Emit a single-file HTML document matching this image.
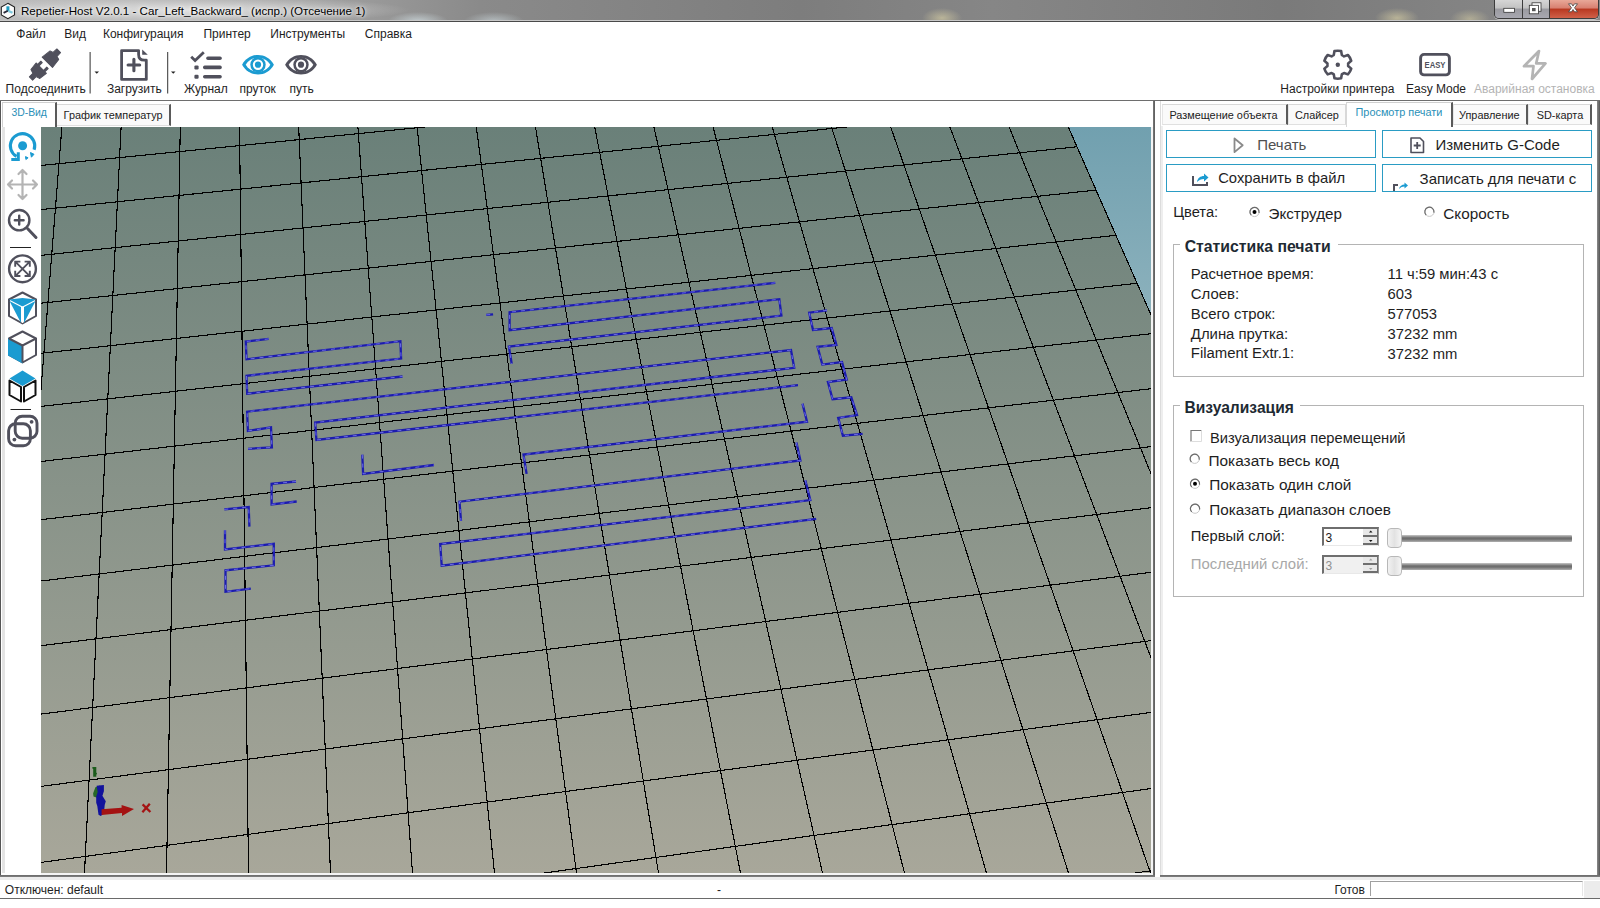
<!DOCTYPE html><html><head><meta charset="utf-8"><style>html,body{margin:0;padding:0;width:1600px;height:908px;overflow:hidden;background:#fff;position:relative;}.t{position:absolute;white-space:pre;font-family:"Liberation Sans", sans-serif;}</style></head><body><div style="position:absolute;left:0;top:0;width:1600px;height:21px;background:radial-gradient(ellipse 220px 14px at 190px 10px, rgba(235,235,235,0.85), rgba(235,235,235,0) 100%),radial-gradient(ellipse 30px 9px at 418px 21px, rgba(220,235,240,0.6), rgba(220,235,240,0)),radial-gradient(ellipse 30px 9px at 494px 21px, rgba(220,235,240,0.5), rgba(220,235,240,0)),radial-gradient(ellipse 20px 10px at 942px 18px, rgba(230,220,170,0.55), rgba(230,220,170,0)),radial-gradient(ellipse 22px 10px at 1397px 18px, rgba(230,220,170,0.55), rgba(230,220,170,0)),radial-gradient(ellipse 20px 10px at 1470px 19px, rgba(230,220,170,0.45), rgba(230,220,170,0)),linear-gradient(90deg,#bdbdbd 0%,#a0a0a0 20%,#8a8a8a 30%,#7d7d7d 50%,#868686 62%,#7a7a7a 80%,#8a8a8a 100%)"></div><div style="position:absolute;left:0px;top:20px;width:1600px;height:1px;background:#c8c8c8"></div><div style="position:absolute;left:0px;top:21px;width:1600px;height:1px;background:#4a4a4a"></div><div class="t" style="left:21.00px;top:5.18px;font-size:11.6px;line-height:11.6px;color:#000;font-weight:normal;text-shadow:0 0 6px #fff,0 0 3px #fff;">Repetier-Host V2.0.1 - Car_Left_Backward_ (испр.) (Отсечение 1)</div><div style="position:absolute;left:1494px;top:0;width:103px;height:18px;border:1px solid #3c3c3c;border-top:none;border-radius:0 0 5px 5px;overflow:hidden;box-shadow:0 1px 0 rgba(255,255,255,0.5);"><div style="position:absolute;left:0;top:0;width:27px;height:18px;background:linear-gradient(#d6d6d6,#c2c2c2 45%,#9a9aa0 50%,#a8a8b0)"></div><div style="position:absolute;left:27px;top:0;width:1px;height:18px;background:#3c3c3c"></div><div style="position:absolute;left:28px;top:0;width:26px;height:18px;background:linear-gradient(#d6d6d6,#c2c2c2 45%,#9a9aa0 50%,#a8a8b0)"></div><div style="position:absolute;left:54px;top:0;width:1px;height:18px;background:#3c3c3c"></div><div style="position:absolute;left:55px;top:0;width:48px;height:18px;background:linear-gradient(#e8a898,#d88070 45%,#b83820 50%,#d06048)"></div></div><svg width="1600" height="22" style="position:absolute;left:0;top:0"><rect x="1503.8" y="8.3" width="10.6" height="4" fill="#fff" stroke="#333" stroke-width="0.8"/><rect x="1532" y="2.8" width="9" height="8.5" fill="#fff" stroke="#333" stroke-width="0.8"/><rect x="1529.3" y="5.3" width="9.2" height="8.5" fill="#fff" stroke="#333" stroke-width="0.8"/><rect x="1532" y="8" width="3.6" height="3.2" fill="#555"/><path d="M1568.5 3.8l3 0 1.5 2.3 1.5-2.3h3l-3 4 3 4h-3l-1.5-2.3-1.5 2.3h-3l3-4z" fill="#fff" stroke="#444" stroke-width="0.8"/></svg><div class="t" style="left:16.30px;top:28.14px;font-size:12px;line-height:12px;color:#1e1e1e;font-weight:normal;">Файл</div><div class="t" style="left:64.30px;top:28.14px;font-size:12px;line-height:12px;color:#1e1e1e;font-weight:normal;">Вид</div><div class="t" style="left:102.90px;top:28.14px;font-size:12px;line-height:12px;color:#1e1e1e;font-weight:normal;">Конфигурация</div><div class="t" style="left:203.40px;top:28.14px;font-size:12px;line-height:12px;color:#1e1e1e;font-weight:normal;">Принтер</div><div class="t" style="left:270.30px;top:28.14px;font-size:12px;line-height:12px;color:#1e1e1e;font-weight:normal;">Инструменты</div><div class="t" style="left:364.80px;top:28.14px;font-size:12px;line-height:12px;color:#1e1e1e;font-weight:normal;">Справка</div><div class="t" style="left:5.60px;top:83.14px;font-size:12px;line-height:12px;color:#1e1e1e;font-weight:normal;">Подсоединить</div><div class="t" style="left:106.90px;top:83.14px;font-size:12px;line-height:12px;color:#1e1e1e;font-weight:normal;">Загрузить</div><div class="t" style="left:184.00px;top:83.14px;font-size:12px;line-height:12px;color:#1e1e1e;font-weight:normal;">Журнал</div><div class="t" style="left:239.50px;top:83.14px;font-size:12px;line-height:12px;color:#1e1e1e;font-weight:normal;">пруток</div><div class="t" style="left:289.50px;top:83.14px;font-size:12px;line-height:12px;color:#1e1e1e;font-weight:normal;">путь</div><div class="t" style="left:1280.30px;top:83.14px;font-size:12px;line-height:12px;color:#1e1e1e;font-weight:normal;">Настройки принтера</div><div class="t" style="left:1406.00px;top:83.14px;font-size:12px;line-height:12px;color:#1e1e1e;font-weight:normal;">Easy Mode </div><div class="t" style="left:1474.00px;top:83.14px;font-size:12px;line-height:12px;color:#b4b4b4;font-weight:normal;">Аварийная остановка</div><svg width="1600" height="100" style="position:absolute;left:0;top:0"><g transform="translate(45 64.5) rotate(-45)" fill="#50505c" stroke="#50505c" stroke-width="1" stroke-linejoin="round"><path d="M3.2 -7.2L13.2 -6L14.2 -2.8L19.4 -2.6L19.4 2.6L14.2 2.8L13.2 6.2L3.2 7.4z"/><path d="M-5.2 -7.4L-5.2 7.2L-13.5 6.2L-14.8 2.3L-19.8 2.3L-19.8 -2.3L-14.8 -2.3L-13.5 -6.4z"/><path d="M-5.5 -5.3L-0.6 -5.3L-0.6 -3.3L-5.5 -3.3zM-5.5 3.1L-0.6 3.1L-0.6 5.1L-5.5 5.1z"/></g><path d="M121.6 50.6H138.6V54.5Q138.6 60.2 144.3 60.2H146.3V79.4H121.6Z" fill="none" stroke="#50505c" stroke-width="2.8" stroke-linejoin="round"/><path d="M142.2 49.5L147.8 54.8L142.6 54.8Q142.2 54.8 142.2 54.4Z" fill="#50505c"/><g stroke="#50505c" stroke-width="3.1" stroke-linecap="round"><path d="M133.9 59.2v11.6M128.1 65h11.6"/></g><path d="M191.2 56.8L195.1 60.5L203.8 52.3" fill="none" stroke="#50505c" stroke-width="2.8"/><g fill="#50505c"><rect x="206.2" y="56.4" width="15.6" height="3.5" rx="1.7"/><rect x="194.4" y="65.4" width="4.2" height="4" rx="1.2"/><rect x="203" y="65.6" width="18.8" height="3.6" rx="1.7"/><rect x="194.4" y="74.7" width="4.2" height="4" rx="1.2"/><rect x="203" y="74.9" width="18.8" height="3.6" rx="1.7"/></g><path d="M242.1 64.7C249 51.7 267 51.7 273.9 64.7C267 77.7 249 77.7 242.1 64.7z" fill="#1b9bd1"/><path d="M245.7 64.7C251 55.300000000000004 265 55.300000000000004 270.3 64.7C265 74.10000000000001 251 74.10000000000001 245.7 64.7z" fill="#fff"/><circle cx="258" cy="64.7" r="7.7" fill="#1b9bd1"/><circle cx="258" cy="64.7" r="5.2" fill="#fff"/><circle cx="258" cy="64.7" r="3.1" fill="#1b9bd1"/><path d="M285.1 64.7C292 51.7 310 51.7 316.9 64.7C310 77.7 292 77.7 285.1 64.7z" fill="#50505c"/><path d="M288.7 64.7C294 55.300000000000004 308 55.300000000000004 313.3 64.7C308 74.10000000000001 294 74.10000000000001 288.7 64.7z" fill="#fff"/><circle cx="301" cy="64.7" r="7.7" fill="#50505c"/><circle cx="301" cy="64.7" r="5.2" fill="#fff"/><circle cx="301" cy="64.7" r="3.1" fill="#50505c"/><path d="M94.5 71.5h4.5l-2.25 2.3z" fill="#222"/><path d="M171 71.5h4.5l-2.25 2.3z" fill="#222"/><rect x="89.6" y="52" width="1" height="41.5" fill="#333"/><rect x="167.2" y="52" width="1" height="41.5" fill="#333"/><path d="M1333.75 55.12L1334.47 51.10A14.0 14.0 0 0 1 1341.13 51.10L1341.85 55.12A10.4 10.4 0 0 1 1344.07 56.40L1347.91 55.02A14.0 14.0 0 0 1 1351.24 60.78L1348.12 63.42A10.4 10.4 0 0 1 1348.12 65.98L1351.24 68.62A14.0 14.0 0 0 1 1347.91 74.38L1344.07 73.00A10.4 10.4 0 0 1 1341.85 74.28L1341.13 78.30A14.0 14.0 0 0 1 1334.47 78.30L1333.75 74.28A10.4 10.4 0 0 1 1331.53 73.00L1327.69 74.38A14.0 14.0 0 0 1 1324.36 68.62L1327.48 65.98A10.4 10.4 0 0 1 1327.48 63.42L1324.36 60.78A14.0 14.0 0 0 1 1327.69 55.02L1331.53 56.40A10.4 10.4 0 0 1 1333.75 55.12z" fill="none" stroke="#50505c" stroke-width="2.6" stroke-linejoin="round"/><circle cx="1337.8" cy="64.7" r="2.2" fill="#50505c"/><rect x="1420.6" y="54.4" width="28.8" height="20.5" rx="3.5" fill="none" stroke="#50505c" stroke-width="2.9"/><text x="1435" y="68.3" font-family="Liberation Sans" font-weight="bold" font-size="8.6" fill="#50505c" text-anchor="middle" textLength="21" lengthAdjust="spacingAndGlyphs">EASY</text><path d="M1539 51L1524 66.2H1533.5L1532 79L1545.5 63.4H1536.2Z" fill="none" stroke="#b4b4b4" stroke-width="2.7" stroke-linejoin="round"/><path d="M7.9 3.3l6.6 3.8v7.8l-6.6 3.8-6.6-3.8v-7.8z" fill="#fafafa" stroke="#222" stroke-width="1.1"/><path d="M7.9 6.3v4.6" stroke="#1f9cc0" stroke-width="3"/><path d="M7.9 10.7l-4.3 2.2" stroke="#2a2a3a" stroke-width="1.8"/><path d="M8.5 10.9l4 1.9" stroke="#7cc8dc" stroke-width="2.2"/></svg><div style="position:absolute;left:0px;top:100px;width:1600px;height:1px;background:#6e6e6e"></div><div style="position:absolute;left:0px;top:101px;width:1px;height:776px;background:#555"></div><div style="position:absolute;left:2px;top:127px;width:3px;height:746px;background:#e4e4e4"></div><div style="position:absolute;left:2px;top:102px;width:55px;height:25px;background:#fff;border-left:1px solid #d0d0d0;border-top:1px solid #d0d0d0;border-right:2px solid #5a5a5a;box-sizing:border-box"></div><div style="position:absolute;left:57px;top:104px;width:114px;height:22px;background:#fafafa;border-top:1px solid #d8d8d8;border-right:2px solid #5a5a5a;border-bottom:1px solid #e0e0e0;box-sizing:border-box"></div><div class="t" style="left:11.40px;top:107.70px;font-size:10.4px;line-height:10.4px;color:#2a90b8;font-weight:normal;">3D-Вид</div><div class="t" style="left:63.60px;top:110.17px;font-size:10.9px;line-height:10.9px;color:#222;font-weight:normal;">График температур</div><svg width="41" height="460" style="position:absolute;left:0;top:0"><path d="M34.1 149.8A12.2 12.2 0 1 0 16.5 156.4" fill="none" stroke="#1b9bd1" stroke-width="3.1"/><path d="M18.3 152.2V159.4H11.3" fill="none" stroke="#1b9bd1" stroke-width="3" stroke-linejoin="miter"/><circle cx="22.6" cy="145.8" r="4.5" fill="#1b9bd1"/><path d="M30.5 152.5l3.5 1.8-2.6 2.9z" fill="#1b9bd1" stroke="#1b9bd1" stroke-width="1"/><path d="M25.5 156.6l2.6 1.2-2.2 1.7z" fill="#1b9bd1" stroke="#1b9bd1" stroke-width="1"/><g fill="none" stroke="#b4b4b4" stroke-width="2.2" stroke-linecap="round" stroke-linejoin="round"><path d="M22.5 170v29M8 184.5h29M18.5 174l4-4 4 4M18.5 195l4 4 4-4M12 180.5l-4 4 4 4M33 180.5l4 4-4 4"/></g><g fill="none" stroke="#50505c" stroke-width="2.4" stroke-linecap="round"><circle cx="19.2" cy="220.2" r="10.2"/><path d="M27.5 228.5l8.5 9" stroke-width="3"/><path d="M19.2 215.8v8.8M14.8 220.2h8.8"/></g><rect x="10" y="247" width="21" height="1" fill="#222"/><g fill="none" stroke="#50505c" stroke-width="2.4"><circle cx="22.5" cy="268.8" r="13.4"/></g><g fill="none" stroke="#50505c" stroke-width="1.9"><path d="M16 262.3l13 13M29 262.3l-13 13M15.2 266.8v-5.2h5.2M29.8 266.8v-5.2h-5.2M15.2 270.8v5.2h5.2M29.8 270.8v5.2h-5.2"/></g><g stroke-linejoin="round"><path d="M22.5 292.5l13.5 7v16.5l-13.5 7.5-13.5-7.5v-16.5z" fill="#fff" stroke="#50505c" stroke-width="2"/><path d="M9 299.5l13.5 7 13.5-7-13.5-1.5z" fill="#1b9bd1"/><path d="M9.5 301l11.5 6v16z" fill="#1b9bd1"/><path d="M35.5 301l-11.5 6v16z" fill="#1b9bd1"/><path d="M22.5 306.5v16.5" stroke="#fff" stroke-width="1.8"/></g><g stroke-linejoin="round"><path d="M22.5 331.5l13.5 7v16.5l-13.5 7.5-13.5-7.5v-16.5z" fill="#fff" stroke="#50505c" stroke-width="2"/><path d="M8 338.5l14.5 7.5v17.5l-14.5-8z" fill="#1b9bd1"/><path d="M9 338.5l13.5 7 13.5-7M22.5 345.5v17" fill="none" stroke="#50505c" stroke-width="2"/></g><g stroke-linejoin="round"><path d="M9.5 378.5l13-8 13 8-13 7.5z" fill="#1b9bd1"/><path d="M9.5 380.5v14.5l11.5 6.5v-14.5zM35.5 380.5v14.5l-11.5 6.5v-14.5z" fill="#fff" stroke="#111" stroke-width="2"/></g><rect x="10.5" y="409" width="20.5" height="1" fill="#222"/><g fill="none" stroke="#50505c" stroke-width="2.9"><rect x="15.2" y="416.2" width="21.8" height="22" rx="7"/><rect x="8.6" y="423.8" width="21.8" height="22" rx="7"/></g><circle cx="31.6" cy="421.8" r="1.9" fill="#50505c"/><circle cx="14.4" cy="439.6" r="1.9" fill="#50505c"/></svg><svg width="1600" height="908" style="position:absolute;left:0;top:0"><defs><linearGradient id="gp" x1="0" y1="127" x2="0" y2="873" gradientUnits="userSpaceOnUse"><stop offset="0" stop-color="#6a8079"/><stop offset="1" stop-color="#a8a79a"/></linearGradient><linearGradient id="gs" x1="0" y1="127" x2="0" y2="320" gradientUnits="userSpaceOnUse"><stop offset="0" stop-color="#71a0af"/><stop offset="1" stop-color="#8db2bd"/></linearGradient><clipPath id="cp"><polygon points="41,127 1068.30,127 1151,314.98 1151,873 41,873"/></clipPath><clipPath id="cv"><rect x="41" y="127" width="1110" height="746"/></clipPath></defs><rect x="41" y="127" width="1110" height="746" fill="url(#gs)"/><polygon points="41,127 1068.30,127 1151,314.98 1151,873 41,873" fill="url(#gp)"/><g clip-path="url(#cp)" stroke="#000" stroke-width="1.1" shape-rendering="crispEdges" fill="none"><path d="M61.90 127L2.50 873 M121.10 127L84.50 873 M180.30 127L166.50 873 M239.50 127L248.50 873 M298.70 127L330.50 873 M357.90 127L412.50 873 M417.10 127L494.50 873 M476.30 127L576.50 873 M535.50 127L658.50 873 M594.70 127L740.50 873 M653.90 127L822.50 873 M713.10 127L904.50 873 M772.30 127L986.50 873 M831.50 127L1068.50 873 M890.70 127L1150.50 873 M949.90 127L1232.50 873 M1009.10 127L1314.50 873 M41 165.50L1151 54.09 M41 209.60L1151 95.75 M41 255.40L1151 139.01 M41 303.20L1151 184.17 M41 353.30L1151 231.49 M41 406.40L1151 281.65 M41 461.50L1151 333.70 M41 519.70L1151 388.68 M41 581.00L1151 446.58 M41 645.70L1151 507.70 M41 714.10L1151 572.31 M41 786.40L1151 640.61 M41 862.40L1151 712.40 M41 943.00L1151 788.53 M41 1030.00L1151 870.72"/></g><g clip-path="url(#cv)" stroke="#000" stroke-width="1.1" shape-rendering="crispEdges"><path d="M1068.30 127L1396.50 873"/></g><path d="M268.7 338.9L245.8 341.5L246.5 359.3L400.4 341.2L401.1 358.6L246.5 375.8L247.2 393.7L402.5 376.5 M775.3 282.8L509.6 312.2L509.6 330.1L779.3 299.2L781.4 315.6L508.9 346.6L511.7 363.8 M248.0 448.8L271.9 447.4L271.0 427.4L247.9 430.9L247.1 411.7L791.0 350.1L794.2 367.8L315.2 422.6L316.4 440.0L798.0 385.2 M802.5 403.6L807.0 421.7L523.5 454.6L526.6 473.9 M362.3 454.6L363.1 473.9L434.0 465.0 M796.4 442.6L800.4 460.5L459.5 501.7L461.0 521.0 M805.3 480.3L810.3 500.1L440.2 544.1L441.7 565.7L816.2 518.9 M827.0 310.3L809.2 312.7L813.0 329.9L831.7 328.0L836.4 344.9L817.6 346.8L822.3 364.6L842.0 362.1L846.7 379.6L827.9 382.0L832.6 399.2L851.3 397.3L857.0 415.1L838.2 417.9L842.9 435.7L862.6 433.9 M296.0 481.5L271.6 483.9L271.6 504.4L296.7 501.5 M224.3 509.4L248.7 507.0L249.4 526.6 M225.0 530.2L225.0 549.5L273.8 543.8L273.8 565.3L225.5 570.3L225.5 591.8L250.8 588.6 M486.2 314.9L493.1 314.3" fill="none" stroke="#1c1cae" stroke-width="2.3" stroke-linejoin="miter"/><path d="M268.7 338.9L245.8 341.5L246.5 359.3L400.4 341.2L401.1 358.6L246.5 375.8L247.2 393.7L402.5 376.5 M775.3 282.8L509.6 312.2L509.6 330.1L779.3 299.2L781.4 315.6L508.9 346.6L511.7 363.8 M248.0 448.8L271.9 447.4L271.0 427.4L247.9 430.9L247.1 411.7L791.0 350.1L794.2 367.8L315.2 422.6L316.4 440.0L798.0 385.2 M802.5 403.6L807.0 421.7L523.5 454.6L526.6 473.9 M362.3 454.6L363.1 473.9L434.0 465.0 M796.4 442.6L800.4 460.5L459.5 501.7L461.0 521.0 M805.3 480.3L810.3 500.1L440.2 544.1L441.7 565.7L816.2 518.9 M827.0 310.3L809.2 312.7L813.0 329.9L831.7 328.0L836.4 344.9L817.6 346.8L822.3 364.6L842.0 362.1L846.7 379.6L827.9 382.0L832.6 399.2L851.3 397.3L857.0 415.1L838.2 417.9L842.9 435.7L862.6 433.9 M296.0 481.5L271.6 483.9L271.6 504.4L296.7 501.5 M224.3 509.4L248.7 507.0L249.4 526.6 M225.0 530.2L225.0 549.5L273.8 543.8L273.8 565.3L225.5 570.3L225.5 591.8L250.8 588.6 M486.2 314.9L493.1 314.3" fill="none" stroke="#9090ff" stroke-width="0.8" stroke-dasharray="4 5" opacity="0.85"/><path d="M92.4 767h3.9v5.6l0.8 1.2-0.8 0.9v2H93.2v-7.8l-0.8-0.4z" fill="#1c5c1c"/><path d="M95.4 787.2l4.6-1.6 2.6 8.7-4 3.9-5.1-1.6-0.4-3.1z" fill="#286828"/><path d="M96.6 785.8l7.3-0.8v6.2l-1.5 4.6 3.4 5.4-1.1 3.9-0.8 8.5-3.1 2.3-2.3-1.2-1.2-8.8-1.1-3.1v-6.2l1.5-4.6z" fill="#12129c"/><path d="M101.6 809.3l20-1.5v-2.8l12.4 4-12 6.9v-2.9l-20.4 2z" fill="#a41212"/><path d="M142.6 804.4l7.8 7.6M149.8 803.8l-7.4 8.4" stroke="#a41414" stroke-width="2.3"/></svg><div style="position:absolute;left:1151px;top:127px;width:2px;height:748px;background:#f4f4f4"></div><div style="position:absolute;left:41px;top:873px;width:1112px;height:2px;background:#f4f4f4"></div><div style="position:absolute;left:1153px;top:101px;width:2px;height:776px;background:linear-gradient(90deg,#7a7a7a,#5a5a5a)"></div><div style="position:absolute;left:0px;top:875px;width:1155px;height:2px;background:linear-gradient(#6a6a6a,#808080)"></div><div style="position:absolute;left:1160px;top:101px;width:1px;height:776px;background:#dcdcdc"></div><div style="position:absolute;left:1161px;top:126px;width:2px;height:749px;background:#eeeeee"></div><div style="position:absolute;left:1597px;top:101px;width:3px;height:776px;background:linear-gradient(90deg,#8a8a8a,#555)"></div><div style="position:absolute;left:1160px;top:875px;width:440px;height:2px;background:linear-gradient(#6a6a6a,#808080)"></div><div style="position:absolute;left:1162px;top:104px;width:126px;height:21px;background:#fafafa;border-top:1px solid #d8d8d8;border-left:1px solid #e6e6e6;border-right:2px solid #5a5a5a;border-bottom:1px solid #e0e0e0;box-sizing:border-box"></div><div class="t" style="left:1169.40px;top:109.97px;font-size:10.9px;line-height:10.9px;color:#222;font-weight:normal;">Размещение объекта</div><div style="position:absolute;left:1288px;top:104px;width:58px;height:21px;background:#fafafa;border-top:1px solid #d8d8d8;border-left:1px solid #e6e6e6;border-right:1px solid #d8d8d8;border-bottom:1px solid #e0e0e0;box-sizing:border-box"></div><div class="t" style="left:1295.00px;top:109.97px;font-size:10.9px;line-height:10.9px;color:#222;font-weight:normal;">Слайсер</div><div style="position:absolute;left:1453px;top:104px;width:75px;height:21px;background:#fafafa;border-top:1px solid #d8d8d8;border-left:1px solid #e6e6e6;border-right:2px solid #5a5a5a;border-bottom:1px solid #e0e0e0;box-sizing:border-box"></div><div class="t" style="left:1459.00px;top:109.97px;font-size:10.9px;line-height:10.9px;color:#222;font-weight:normal;">Управление</div><div style="position:absolute;left:1528px;top:104px;width:64px;height:21px;background:#fafafa;border-top:1px solid #d8d8d8;border-left:1px solid #e6e6e6;border-right:2px solid #5a5a5a;border-bottom:1px solid #e0e0e0;box-sizing:border-box"></div><div class="t" style="left:1536.70px;top:109.97px;font-size:10.9px;line-height:10.9px;color:#222;font-weight:normal;">SD-карта</div><div style="position:absolute;left:1346px;top:102px;width:107px;height:25px;background:#fff;border-top:1px solid #d0d0d0;border-left:1px solid #d8d8d8;border-right:2px solid #5a5a5a;box-sizing:border-box"></div><div class="t" style="left:1355.50px;top:107.37px;font-size:10.9px;line-height:10.9px;color:#2a90b8;font-weight:normal;">Просмотр печати</div><div style="position:absolute;left:1166px;top:130px;width:210px;height:28px;border:1px solid #2a9cc4;box-sizing:border-box;background:#fff"></div><div style="position:absolute;left:1382px;top:130px;width:210px;height:28px;border:1px solid #2a9cc4;box-sizing:border-box;background:#fff"></div><div style="position:absolute;left:1166px;top:164px;width:210px;height:28px;border:1px solid #2a9cc4;box-sizing:border-box;background:#fff"></div><div style="position:absolute;left:1382px;top:164px;width:210px;height:28px;border:1px solid #2a9cc4;box-sizing:border-box;background:#fff"></div><div class="t" style="left:1257.20px;top:137.10px;font-size:15px;line-height:15px;color:#505050;font-weight:normal;">Печать</div><div class="t" style="left:1435.40px;top:137.00px;font-size:15px;line-height:15px;color:#1e1e1e;font-weight:normal;">Изменить G-Code</div><div class="t" style="left:1218.20px;top:171.07px;font-size:14.8px;line-height:14.8px;color:#1e1e1e;font-weight:normal;">Сохранить в файл</div><div class="t" style="left:1419.60px;top:170.90px;font-size:15px;line-height:15px;color:#1e1e1e;font-weight:normal;">Записать для печати с</div><svg width="1600" height="240" style="position:absolute;left:0;top:0"><path d="M1234.5 138.5l8.2 6.8-8.2 6.8z" fill="none" stroke="#8a8a8a" stroke-width="1.8" stroke-linejoin="round"/><g fill="none" stroke="#50505c" stroke-width="1.6" stroke-linejoin="round"><path d="M1411 138h9l3.5 3.5v11h-12.5z"/></g><path d="M1417.2 142v7M1413.7 145.5h7" stroke="#50505c" stroke-width="1.8"/><path d="M1193 176v9h14v-3" fill="none" stroke="#50505c" stroke-width="2"/><path d="M1197 182c0.5-4 3.5-6 7-6v-2.5l4.5 4-4.5 4v-2.5c-3 0-5 1-7 3z" fill="#1b9bd1"/><path d="M1394 191v-6h4" fill="none" stroke="#50505c" stroke-width="2"/><path d="M1399 189c0.5-3 3-4.5 5.5-4.5v-2l3.5 3-3.5 3v-2c-2 0-4 0.8-5.5 2.5z" fill="#1b9bd1"/></svg><div class="t" style="left:1173.20px;top:204.76px;font-size:14.7px;line-height:14.7px;color:#1e1e1e;font-weight:normal;">Цвета:</div><div class="t" style="left:1268.50px;top:205.83px;font-size:15.2px;line-height:15.2px;color:#1e1e1e;font-weight:normal;">Экструдер</div><div class="t" style="left:1443.30px;top:205.95px;font-size:15.3px;line-height:15.3px;color:#1e1e1e;font-weight:normal;">Скорость</div><svg width="1600" height="600" style="position:absolute;left:0;top:0"><circle cx="1254.5" cy="212" r="4.6" fill="#fff" stroke="#c8c8c8" stroke-width="1"/><path d="M1251.2 215.2A4.6 4.6 0 1 1 1259.05 212.8" fill="none" stroke="#6a6a6a" stroke-width="1.2"/><circle cx="1254.5" cy="212" r="2.0" fill="#000"/><circle cx="1429.4" cy="211.8" r="4.6" fill="#fff" stroke="#c8c8c8" stroke-width="1"/><path d="M1426.1000000000001 215.0A4.6 4.6 0 1 1 1433.95 212.60000000000002" fill="none" stroke="#6a6a6a" stroke-width="1.2"/><circle cx="1194.7" cy="458.8" r="4.6" fill="#fff" stroke="#c8c8c8" stroke-width="1"/><path d="M1191.4 462.0A4.6 4.6 0 1 1 1199.25 459.6" fill="none" stroke="#6a6a6a" stroke-width="1.2"/><circle cx="1195" cy="483.8" r="4.6" fill="#fff" stroke="#c8c8c8" stroke-width="1"/><path d="M1191.7 487.0A4.6 4.6 0 1 1 1199.55 484.6" fill="none" stroke="#6a6a6a" stroke-width="1.2"/><circle cx="1195" cy="483.8" r="2.0" fill="#000"/><circle cx="1195" cy="508.7" r="4.6" fill="#fff" stroke="#c8c8c8" stroke-width="1"/><path d="M1191.7 511.9A4.6 4.6 0 1 1 1199.55 509.5" fill="none" stroke="#6a6a6a" stroke-width="1.2"/><path d="M1191 441.5v-11h10.5" fill="none" stroke="#777" stroke-width="1.2"/><path d="M1201.5 430.5v11h-10.5" fill="none" stroke="#ddd" stroke-width="1"/></svg><div style="position:absolute;left:1173px;top:244px;width:411px;height:133px;border:1px solid #b4b4b4;box-sizing:border-box"></div><div style="position:absolute;left:1180px;top:236px;width:158px;height:14px;background:#fff"></div><div class="t" style="left:1184.70px;top:239.03px;font-size:15.8px;line-height:15.8px;color:#1e2a33;font-weight:bold;">Статистика печати</div><div class="t" style="left:1190.80px;top:266.69px;font-size:14.9px;line-height:14.9px;color:#1e1e1e;font-weight:normal;">Расчетное время:</div><div class="t" style="left:1387.50px;top:266.77px;font-size:14.8px;line-height:14.8px;color:#1e1e1e;font-weight:normal;">11 ч:59 мин:43 с</div><div class="t" style="left:1190.80px;top:286.64px;font-size:14.9px;line-height:14.9px;color:#1e1e1e;font-weight:normal;">Слоев:</div><div class="t" style="left:1387.50px;top:286.72px;font-size:14.8px;line-height:14.8px;color:#1e1e1e;font-weight:normal;">603</div><div class="t" style="left:1190.80px;top:306.59px;font-size:14.9px;line-height:14.9px;color:#1e1e1e;font-weight:normal;">Всего строк:</div><div class="t" style="left:1387.50px;top:306.67px;font-size:14.8px;line-height:14.8px;color:#1e1e1e;font-weight:normal;">577053</div><div class="t" style="left:1190.80px;top:326.54px;font-size:14.9px;line-height:14.9px;color:#1e1e1e;font-weight:normal;">Длина прутка:</div><div class="t" style="left:1387.50px;top:326.62px;font-size:14.8px;line-height:14.8px;color:#1e1e1e;font-weight:normal;">37232 mm</div><div class="t" style="left:1190.80px;top:346.49px;font-size:14.9px;line-height:14.9px;color:#1e1e1e;font-weight:normal;">Filament Extr.1:</div><div class="t" style="left:1387.50px;top:346.57px;font-size:14.8px;line-height:14.8px;color:#1e1e1e;font-weight:normal;">37232 mm</div><div style="position:absolute;left:1173px;top:405px;width:411px;height:192px;border:1px solid #b4b4b4;box-sizing:border-box"></div><div style="position:absolute;left:1180px;top:397px;width:120px;height:14px;background:#fff"></div><div class="t" style="left:1184.50px;top:400.19px;font-size:15.6px;line-height:15.6px;color:#1e2a33;font-weight:bold;">Визуализация</div><div class="t" style="left:1210.00px;top:430.96px;font-size:14.7px;line-height:14.7px;color:#1e1e1e;font-weight:normal;">Визуализация перемещений</div><div class="t" style="left:1208.50px;top:452.56px;font-size:15.4px;line-height:15.4px;color:#1e1e1e;font-weight:normal;">Показать весь код</div><div class="t" style="left:1209.20px;top:477.26px;font-size:15.4px;line-height:15.4px;color:#1e1e1e;font-weight:normal;">Показать один слой</div><div class="t" style="left:1209.20px;top:502.15px;font-size:15.3px;line-height:15.3px;color:#1e1e1e;font-weight:normal;">Показать диапазон слоев</div><div class="t" style="left:1190.80px;top:529.36px;font-size:14.7px;line-height:14.7px;color:#1e1e1e;font-weight:normal;">Первый слой:</div><div class="t" style="left:1190.80px;top:557.29px;font-size:14.9px;line-height:14.9px;color:#a8a8a8;font-weight:normal;">Последний слой:</div><div style="position:absolute;left:1322px;top:527px;width:57px;height:19px;background:#fff;border-top:2px solid #6e6e6e;border-left:2px solid #6e6e6e;border-right:1px solid #999;border-bottom:1px solid #e8e8e8;box-sizing:border-box"></div><div style="position:absolute;left:1363px;top:529px;width:15px;height:16px;background:#e8e8e8;border-bottom:2px solid #6e6e6e;border-right:1px solid #6e6e6e;box-sizing:border-box"></div><div style="position:absolute;left:1363px;top:535px;width:15px;height:2px;background:#6e6e6e"></div><svg width="1600" height="600" style="position:absolute;left:0;top:0"><path d="M1369 532.5h3.5l-1.75-2z" fill="#111"/><path d="M1369 540h3.5l-1.75 2z" fill="#111"/></svg><div class="t" style="left:1325.50px;top:531.64px;font-size:12px;line-height:12px;color:#1e1e1e;font-weight:normal;">3</div><div style="position:absolute;left:1394px;top:534.5px;width:178px;height:7px;background:linear-gradient(#c8c8c8,#7a7a7a 35%,#6a6a6a 55%,#b0b0b0);border-radius:1px"></div><div style="position:absolute;left:1387.3px;top:528px;width:14.5px;height:19.5px;background:linear-gradient(90deg,#f2f2f2,#e2e2e2 50%,#f4f4f4);border:1px solid #b8b8b8;border-radius:4px;box-sizing:border-box"></div><div style="position:absolute;left:1322px;top:555px;width:57px;height:19px;background:#f0f0f0;border-top:2px solid #6e6e6e;border-left:2px solid #6e6e6e;border-right:1px solid #999;border-bottom:1px solid #e8e8e8;box-sizing:border-box"></div><div style="position:absolute;left:1363px;top:557px;width:15px;height:16px;background:#e8e8e8;border-bottom:2px solid #6e6e6e;border-right:1px solid #6e6e6e;box-sizing:border-box"></div><div style="position:absolute;left:1363px;top:563px;width:15px;height:2px;background:#6e6e6e"></div><svg width="1600" height="600" style="position:absolute;left:0;top:0"><path d="M1369 560.5h3.5l-1.75-2z" fill="#a0a0a0"/><path d="M1369 568h3.5l-1.75 2z" fill="#a0a0a0"/></svg><div class="t" style="left:1325.50px;top:559.64px;font-size:12px;line-height:12px;color:#909090;font-weight:normal;">3</div><div style="position:absolute;left:1394px;top:562.5px;width:178px;height:7px;background:linear-gradient(#c8c8c8,#7a7a7a 35%,#6a6a6a 55%,#b0b0b0);border-radius:1px"></div><div style="position:absolute;left:1387.3px;top:556px;width:14.5px;height:19.5px;background:linear-gradient(90deg,#f2f2f2,#e2e2e2 50%,#f4f4f4);border:1px solid #b8b8b8;border-radius:4px;box-sizing:border-box"></div><div style="position:absolute;left:0px;top:877px;width:1600px;height:3px;background:#ececec"></div><div style="position:absolute;left:0px;top:880px;width:1600px;height:18px;background:#fff"></div><div style="position:absolute;left:0px;top:898px;width:1600px;height:1px;background:#6a6a6a"></div><div class="t" style="left:4.80px;top:883.64px;font-size:12px;line-height:12px;color:#1e1e1e;font-weight:normal;">Отключен: default</div><div class="t" style="left:717.00px;top:883.64px;font-size:12px;line-height:12px;color:#1e1e1e;font-weight:normal;">-</div><div class="t" style="left:1334.40px;top:883.64px;font-size:12px;line-height:12px;color:#1e1e1e;font-weight:normal;">Готов</div><div style="position:absolute;left:1370px;top:881px;width:213px;height:15px;border-top:1px solid #a0a0a0;border-left:1px solid #a0a0a0;border-right:1px solid #e6e6e6;box-sizing:border-box;background:#fff"></div><div style="position:absolute;left:1584px;top:881px;width:16px;height:17px;background:#ececec"></div></body></html>
